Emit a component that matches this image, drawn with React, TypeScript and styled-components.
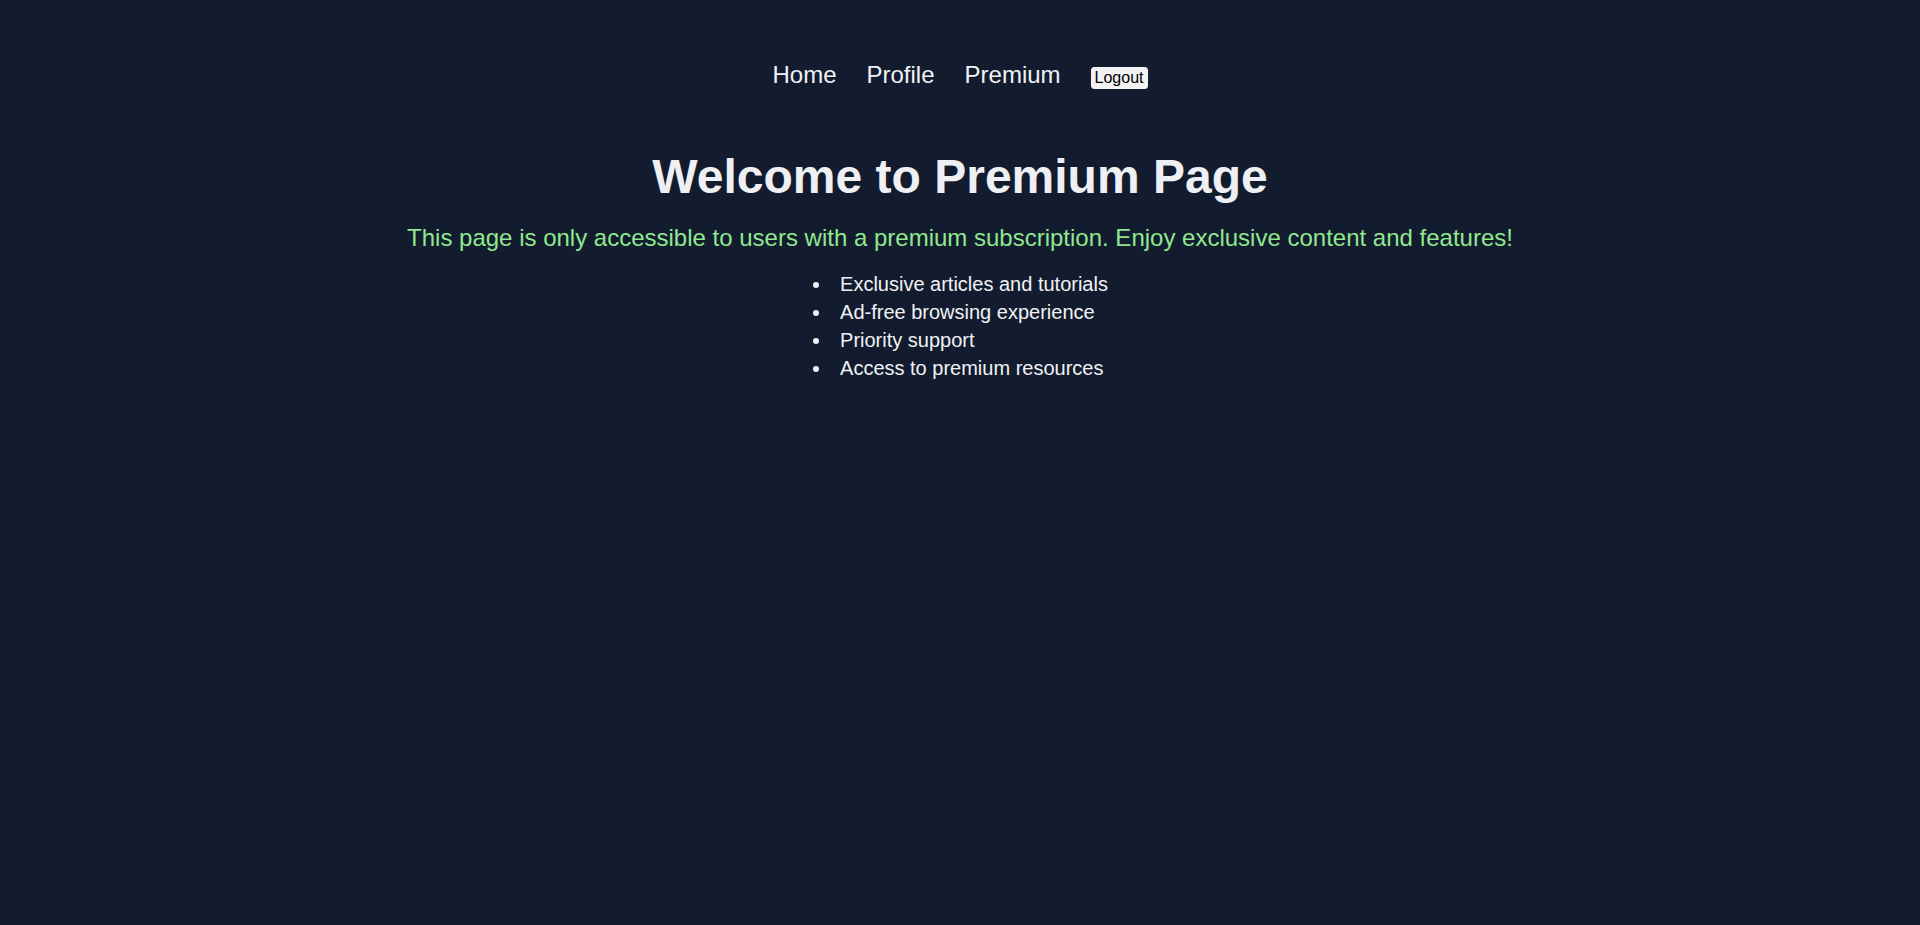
import React from "react";
import styled, { createGlobalStyle } from "styled-components";

const GlobalStyle = createGlobalStyle`
  html, body {
    margin: 0;
    padding: 0;
    background: #131b2e;
  }
  body {
    font-family: "Liberation Sans", Arial, sans-serif;
    color: #f0f2f5;
    min-height: 925px;
  }
`;

const Page = styled.div`
  display: flex;
  flex-direction: column;
  align-items: center;
  padding-top: 61px;
`;

const Nav = styled.nav`
  display: flex;
  align-items: baseline;
  justify-content: center;
  gap: 30px;
  height: 28px;
`;

const NavLink = styled.a`
  font-size: 24px;
  line-height: 28px;
  color: #f0f2f5;
  text-decoration: none;
  cursor: pointer;
`;

const LogoutButton = styled.button`
  font-family: "Liberation Sans", Arial, sans-serif;
  font-size: 16px;
  line-height: normal;
  color: #000;
  background: #f2f2f2;
  border: 1px solid #f2f2f2;
  border-radius: 3px;
  padding: 1px 3px;
  cursor: pointer;
`;

const Title = styled.h1`
  margin: 60px 0 0;
  font-size: 48px;
  line-height: 56px;
  font-weight: 700;
  color: #eef0f4;
  text-align: center;
`;

const Lead = styled.p`
  margin: 19px 0 0;
  font-size: 24px;
  line-height: 28px;
  color: #8fe88f;
  text-align: center;
`;

const Features = styled.ul`
  margin: 18px 0 0;
  padding: 0 12px 0 40px;
  list-style: none;
  text-align: left;
`;

const Feature = styled.li`
  position: relative;
  font-size: 20px;
  line-height: 28px;
  color: #f0f2f5;

  &::before {
    content: "";
    position: absolute;
    left: -27px;
    top: 12px;
    width: 6px;
    height: 6px;
    border-radius: 50%;
    background: #f0f2f5;
  }
`;

const features = [
  "Exclusive articles and tutorials",
  "Ad-free browsing experience",
  "Priority support",
  "Access to premium resources",
];

export default function App() {
  return (
    <>
      <GlobalStyle />
      <Page>
        <Nav>
          <NavLink>Home</NavLink>
          <NavLink>Profile</NavLink>
          <NavLink>Premium</NavLink>
          <LogoutButton>Logout</LogoutButton>
        </Nav>
        <Title>Welcome to Premium Page</Title>
        <Lead>
          This page is only accessible to users with a premium subscription.
          Enjoy exclusive content and features!
        </Lead>
        <Features>
          {features.map((f) => (
            <Feature key={f}>{f}</Feature>
          ))}
        </Features>
      </Page>
    </>
  );
}
